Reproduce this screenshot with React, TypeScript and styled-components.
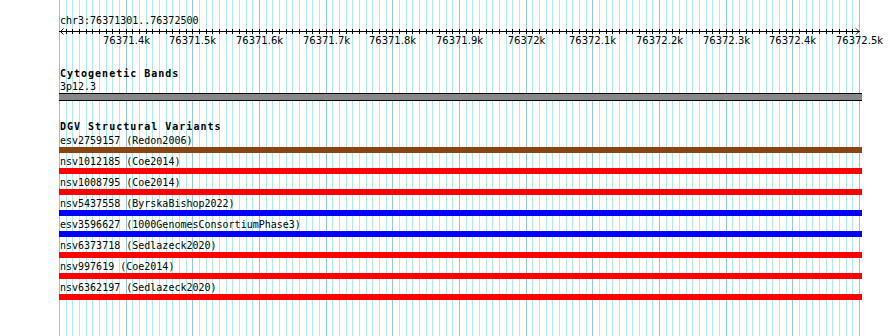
import React from "react";
import styled, { createGlobalStyle } from "styled-components";

const START = 76371300;
const END = 76372500;
const LEFT = 59;
const PX_PER_BP = 800 / (END - START);
const WIDTH = 890;
const HEIGHT = 336;

const xOf = (bp: number) => Math.round(LEFT + (bp - START) * PX_PER_BP);

const GlobalStyle = createGlobalStyle`
  body {
    margin: 0;
    background: #ffffff;
  }
`;

const Page = styled.div`
  display: grid;
  width: ${WIDTH}px;
  height: ${HEIGHT}px;
  overflow: hidden;
  background: #ffffff;

  & > * {
    grid-area: 1 / 1;
  }
`;

const GridLayer = styled.svg`
  display: block;
`;

const Content = styled.div`
  display: flex;
  flex-direction: column;
  font-family: "DejaVu Sans Mono", "Liberation Mono", monospace;
  color: #000000;
`;

const Ruler = styled.div`
  padding-top: 15px;
`;

const ChrLabel = styled.div`
  padding-left: 60px;
  font-size: 10px;
  line-height: 12px;
  height: 12px;
`;

const Axis = styled.svg`
  display: block;
  font-family: "DejaVu Sans", "Liberation Sans", sans-serif;
  font-size: 10px;
`;

const Track = styled.section<{ $gap: number }>`
  display: flex;
  flex-direction: column;
  margin-top: ${(p) => p.$gap}px;
  padding-left: ${LEFT}px;
`;

const TrackTitle = styled.h3<{ $h: number }>`
  margin: 0;
  padding-left: 1px;
  font-size: 10px;
  font-weight: bold;
  letter-spacing: 1px;
  line-height: ${(p) => p.$h}px;
  height: ${(p) => p.$h}px;
  white-space: nowrap;
`;

const FeatureLabel = styled.div<{ $h: number }>`
  box-sizing: border-box;
  padding: ${(p) => p.$h - 12}px 0 0 1px;
  font-size: 10px;
  line-height: 12px;
  height: ${(p) => p.$h}px;
  white-space: nowrap;
`;

const Band = styled.div`
  width: 803px;
  height: 6px;
  background: #888888;
  border-top: 1px solid #000000;
  border-bottom: 1px solid #000000;
`;

const FeatureBar = styled.div<{ $color: string }>`
  width: 803px;
  height: 6px;
  background: ${(p) => p.$color};
`;

const variants = [
  { name: "esv2759157", study: "Redon2006", color: "#8b4513" },
  { name: "nsv1012185", study: "Coe2014", color: "#ff0000" },
  { name: "nsv1008795", study: "Coe2014", color: "#ff0000" },
  { name: "nsv5437558", study: "ByrskaBishop2022", color: "#0000ff" },
  { name: "esv3596627", study: "1000GenomesConsortiumPhase3", color: "#0000ff" },
  { name: "nsv6373718", study: "Sedlazeck2020", color: "#ff0000" },
  { name: "nsv997619", study: "Coe2014", color: "#ff0000" },
  { name: "nsv6362197", study: "Sedlazeck2020", color: "#ff0000" },
];

const positions: number[] = [];
for (let bp = START; bp <= END; bp += 10) positions.push(bp);

// 76372000 -> "76372k", 76371400 -> "76371.4k"
const kb = (bp: number) => `${parseFloat((bp / 1000).toFixed(1))}k`;

const Grid = () => (
  <GridLayer width={WIDTH} height={HEIGHT}>
    {positions.map((bp) => {
      const x = xOf(bp) + 0.5;
      const major = bp % 100 === 0;
      return (
        <line
          key={bp}
          x1={x}
          x2={x}
          y1={0}
          y2={HEIGHT}
          stroke={major ? "#8fc7e6" : "#aeeaee"}
          strokeWidth={1}
        />
      );
    })}
  </GridLayer>
);

const ScaleAxis = () => {
  const left = xOf(START);
  const right = xOf(END);
  return (
    <Axis width={WIDTH} height={21}>
      <line x1={left} x2={right + 1} y1={4.5} y2={4.5} stroke="#000" />
      {positions.slice(1, -1).map((bp) => (
        <line
          key={bp}
          x1={xOf(bp) + 0.5}
          x2={xOf(bp) + 0.5}
          y1={2}
          y2={7}
          stroke="#000"
        />
      ))}
      <path d={`M${left + 4.5},1.5 L${left + 1.5},4.5 L${left + 4.5},7.5`} fill="none" stroke="#000" />
      <path d={`M${right - 3},1.5 L${right},4.5 L${right - 3},7.5`} fill="none" stroke="#000" />
      {positions
        .filter((bp) => bp % 100 === 0 && bp !== START)
        .map((bp) => (
          <text key={bp} x={xOf(bp) + 0.5} y={16.5} textAnchor="middle" fill="#000">
            {kb(bp)}
          </text>
        ))}
    </Axis>
  );
};

export default function App() {
  return (
    <>
      <GlobalStyle />
      <Page>
        <Grid />
        <Content>
          <Ruler>
            <ChrLabel>chr3:76371301..76372500</ChrLabel>
            <ScaleAxis />
          </Ruler>
          <Track $gap={19}>
            <TrackTitle $h={13}>Cytogenetic Bands</TrackTitle>
            <FeatureLabel $h={13}>3p12.3</FeatureLabel>
            <Band />
          </Track>
          <Track $gap={21}>
            <TrackTitle $h={10}>DGV Structural Variants</TrackTitle>
            {variants.map((v) => (
              <React.Fragment key={v.name}>
                <FeatureLabel $h={15}>
                  {v.name} ({v.study})
                </FeatureLabel>
                <FeatureBar $color={v.color} />
              </React.Fragment>
            ))}
          </Track>
        </Content>
      </Page>
    </>
  );
}
